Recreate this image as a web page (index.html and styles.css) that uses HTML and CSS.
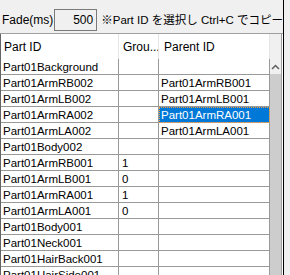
FILE: index.html
```html
<!DOCTYPE html>
<html lang="ja">
<head>
  <meta charset="UTF-8" />
  <title>Parts</title>
  <link rel="stylesheet" href="styles.css">
</head>
<body>
  <div class="window">
    <div class="main">
      <div class="toolbar">
        <span class="label">Fade(ms)</span>
        <span class="num-input">500</span>
        <span class="hint">※Part ID を選択し Ctrl+C でコピー</span>
      </div>
      <div class="grid">
        <div class="table">
          <div class="row head">
            <div class="cell">Part ID</div>
            <div class="cell">Grou...</div>
            <div class="cell">Parent ID</div>
          </div>
          <div class="row"><div class="cell">Part01Background</div><div class="cell"></div><div class="cell"></div></div>
          <div class="row"><div class="cell">Part01ArmRB002</div><div class="cell"></div><div class="cell">Part01ArmRB001</div></div>
          <div class="row"><div class="cell">Part01ArmLB002</div><div class="cell"></div><div class="cell">Part01ArmLB001</div></div>
          <div class="row"><div class="cell">Part01ArmRA002</div><div class="cell"></div><div class="cell selected">Part01ArmRA001</div></div>
          <div class="row"><div class="cell">Part01ArmLA002</div><div class="cell"></div><div class="cell">Part01ArmLA001</div></div>
          <div class="row"><div class="cell">Part01Body002</div><div class="cell"></div><div class="cell"></div></div>
          <div class="row"><div class="cell">Part01ArmRB001</div><div class="cell">1</div><div class="cell"></div></div>
          <div class="row"><div class="cell">Part01ArmLB001</div><div class="cell">0</div><div class="cell"></div></div>
          <div class="row"><div class="cell">Part01ArmRA001</div><div class="cell">1</div><div class="cell"></div></div>
          <div class="row"><div class="cell">Part01ArmLA001</div><div class="cell">0</div><div class="cell"></div></div>
          <div class="row"><div class="cell">Part01Body001</div><div class="cell"></div><div class="cell"></div></div>
          <div class="row"><div class="cell">Part01Neck001</div><div class="cell"></div><div class="cell"></div></div>
          <div class="row"><div class="cell">Part01HairBack001</div><div class="cell"></div><div class="cell"></div></div>
          <div class="row"><div class="cell">Part01HairSide001</div><div class="cell"></div><div class="cell"></div></div>
        </div>
        <div class="scrollbar">
          <div class="sb-corner"></div>
          <div class="sb-up">
            <svg width="9" height="6" viewBox="0 0 9 6"><polyline points="1,5 4.5,1.5 8,5" fill="none" stroke="#606060" stroke-width="1.5"/></svg>
          </div>
          <div class="sb-thumb"></div>
        </div>
      </div>
    </div>
  </div>
</body>
</html>
```
FILE: styles.css
```css
*{box-sizing:border-box;margin:0;padding:0;}
body{background:#f0f0f0;font-family:'Liberation Sans','Noto Sans CJK JP',sans-serif;color:#000;}
.window{display:flex;width:290px;height:275px;overflow:hidden;}
.main{width:284px;flex:none;border-right:1px solid #000;display:flex;flex-direction:column;}

/* top bar */
.toolbar{height:33px;flex:none;display:flex;align-items:flex-start;padding:9px 0 0 2px;font-size:12px;white-space:nowrap;overflow:hidden;}
.toolbar span{line-height:22px;}
.num-input{width:50px;height:22px;margin-left:1px;border:1px solid #7a7a7a;text-align:right;padding-right:3px;line-height:20px !important;}
.hint{margin-left:4px;font-size:11.5px;}

/* grid */
.grid{flex:1;display:flex;border-top:1px solid #a0a0a0;background:#fff;}
.table{width:270px;flex:none;border-left:1px solid #646464;}
.row{display:grid;grid-template-columns:118px 40px 111px;height:16px;}
.cell{height:16px;border-right:1px solid #999;border-bottom:1px solid #999;padding:2px 0 0 2px;font-size:11.5px;line-height:13px;white-space:nowrap;overflow:hidden;}
.row .cell:nth-child(2){padding-left:3px;}
.row.head{height:25px;}
.row.head .cell{height:25px;border-right-color:#e5e5e5;border-bottom:none;padding:6px 0 0 3px;font-size:12px;line-height:15px;}
.row.head .cell:nth-child(2){padding-left:4px;}
.row.head .cell:nth-child(3){padding-left:5px;}
.cell.selected{background:#0078d7;color:#fff;outline:1px dotted #f0a040;outline-offset:-1px;}

/* scrollbar */
.scrollbar{width:12px;flex:none;display:flex;flex-direction:column;background:#f0f0f0;border-right:1px solid #a0a0a0;}
.sb-corner{height:25px;}
.sb-up{height:15px;display:flex;align-items:center;justify-content:center;}
.sb-thumb{flex:1;background:#cdcdcd;}
```
